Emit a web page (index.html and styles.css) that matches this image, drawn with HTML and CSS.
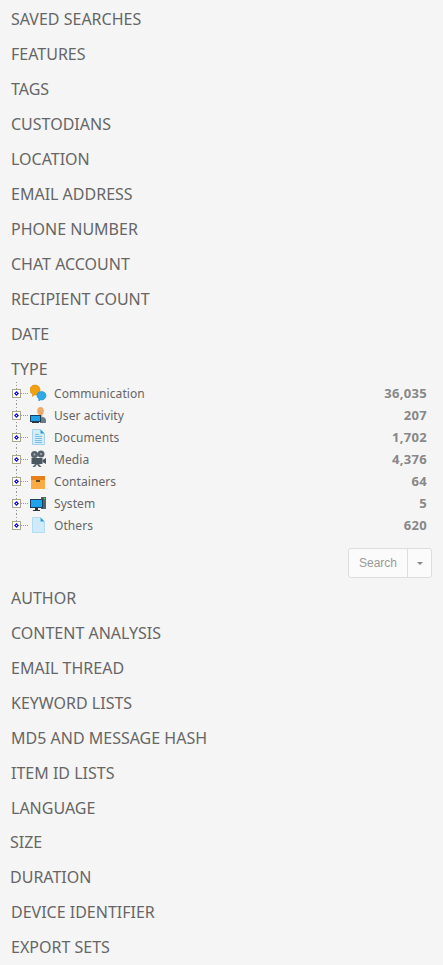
FILE: index.html
```html
<!DOCTYPE html>
<html lang="en">
<head>
<meta charset="utf-8">
<title>Filters</title>
<link rel="stylesheet" href="styles.css">
</head>
<body>
<svg class="defs" width="0" height="0" aria-hidden="true">
  <symbol id="plus" viewBox="0 0 9 9">
    <rect x=".5" y=".5" width="8" height="8" fill="#fff" stroke="#aba78f"/>
    <path d="M4.500 2 7 4.500 4.500 7 2 4.500Z" fill="#1414ee"/>
    <rect x="4" y="4" width="1" height="1" fill="#fff"/>
  </symbol>
</svg>
<section class="group">
  <h3 class="head">SAVED SEARCHES</h3>
  <h3 class="head">FEATURES</h3>
  <h3 class="head">TAGS</h3>
  <h3 class="head">CUSTODIANS</h3>
  <h3 class="head">LOCATION</h3>
  <h3 class="head">EMAIL ADDRESS</h3>
  <h3 class="head">PHONE NUMBER</h3>
  <h3 class="head">CHAT ACCOUNT</h3>
  <h3 class="head">RECIPIENT COUNT</h3>
  <h3 class="head">DATE</h3>
  <h3 class="head">TYPE</h3>
</section>
<ul class="tree">
  <li class="node">
    <svg class="toggle"><use href="#plus"/></svg><span class="stub"></span>
    <svg class="icon" viewBox="0 0 18 18">
      <path d="M0 6C0 3 2.300 1 5 1s5 2 5 5-2.300 5-5 5H4L2.500 12.500V10C.8 9.300 0 7.800 0 6Z" fill="#f0a010" stroke="#d98a08" stroke-width=".6"/>
      <path d="M7 11.500C7 9 9.200 7.500 11.500 7.500S16 9 16 11.500 14 16 11.500 16c-.5 0-1 0-1.300-.2L8.800 17v-2.200C7.700 14 7 12.800 7 11.500Z" fill="#2fa8e8" stroke="#1a8ccc" stroke-width=".6"/>
    </svg>
    <span class="label">Communication</span><span class="count">36,035</span>
  </li>
  <li class="node">
    <svg class="toggle"><use href="#plus"/></svg><span class="stub"></span>
    <svg class="icon" viewBox="0 0 18 18">
      <ellipse cx="10.500" cy="5" rx="3.300" ry="4" fill="#f0a868"/>
      <path d="M8.700 8.500h3.600v3H8.700Z" fill="#e89850"/>
      <path d="M10 11.500c2.800-1.300 5.600-.5 6 2.500v3H10Z" fill="#6d7b86"/>
      <rect x="0" y="9" width="11" height="7" fill="#1d3f5e"/>
      <rect x="1" y="10" width="9" height="5" fill="#20a0e8"/>
      <rect x="2" y="16" width="7" height="1" fill="#333"/>
    </svg>
    <span class="label">User activity</span><span class="count">207</span>
  </li>
  <li class="node">
    <svg class="toggle"><use href="#plus"/></svg><span class="stub"></span>
    <svg class="icon" viewBox="0 0 18 18">
      <path d="M2.500 1.500H10.500L14.500 5.500V16.500H2.500Z" fill="#d3ecfa" stroke="#a9d3ea"/>
      <path d="M10.500 1.500 14.500 5.500H10.500Z" fill="#2a9ddf"/>
      <path d="M5 6.500h4M5 8.500h7M5 10.500h7M5 12.500h7M5 14.500h7" stroke="#7cbfe4"/>
    </svg>
    <span class="label">Documents</span><span class="count">1,702</span>
  </li>
  <li class="node">
    <svg class="toggle"><use href="#plus"/></svg><span class="stub"></span>
    <svg class="icon" viewBox="0 0 18 18">
      <circle cx="4.500" cy="4.500" r="3.500" fill="#56636d"/>
      <circle cx="11" cy="4" r="3.500" fill="#56636d"/>
      <circle cx="4.500" cy="4.500" r="1" fill="#aab3ba"/>
      <circle cx="11" cy="4" r="1" fill="#aab3ba"/>
      <rect x="1.500" y="8" width="11" height="6" fill="#4a5660"/>
      <path d="M12.500 10 16 8V14L12.500 12Z" fill="#4a5660"/>
      <path d="M5 14 2.500 17H5L7 14.500 9 17H11.500L9 14Z" fill="#5e6a74"/>
    </svg>
    <span class="label">Media</span><span class="count">4,376</span>
  </li>
  <li class="node">
    <svg class="toggle"><use href="#plus"/></svg><span class="stub"></span>
    <svg class="icon" viewBox="0 0 18 18">
      <rect x="1" y="4" width="14" height="4" fill="#e8801a"/>
      <rect x="1" y="8" width="14" height="9" fill="#fbab45"/>
      <rect x="6" y="8" width="4" height="2" fill="#5a4630"/>
    </svg>
    <span class="label">Containers</span><span class="count">64</span>
  </li>
  <li class="node">
    <svg class="toggle"><use href="#plus"/></svg><span class="stub"></span>
    <svg class="icon" viewBox="0 0 18 18">
      <rect x="11" y="3" width="5" height="12" fill="#56636d"/>
      <rect x="14" y="4" width="1.200" height="1.200" fill="#3fd03f"/>
      <rect x="0" y="5" width="13" height="9" fill="#1d3f5e"/>
      <rect x="1" y="6" width="11" height="7" fill="#1ea3ea"/>
      <path d="M5 14h3v2h2v1H3v-1h2Z" fill="#333"/>
    </svg>
    <span class="label">System</span><span class="count">5</span>
  </li>
  <li class="node">
    <svg class="toggle"><use href="#plus"/></svg><span class="stub"></span>
    <svg class="icon" viewBox="0 0 18 18">
      <path d="M2.500 1.500H10.500L14.500 5.500V16.500H2.500Z" fill="#cfeafa" stroke="#b2dcf2"/>
      <path d="M10.500 1.500 14.500 5.500H10.500Z" fill="#2a9ddf"/>
    </svg>
    <span class="label">Others</span><span class="count">620</span>
  </li>
</ul>
<div class="actions">
  <div class="split">
    <button class="btn" type="button">Search</button>
    <button class="btn caret-btn" type="button" aria-label="More"><span class="caret"></span></button>
  </div>
</div>
<section class="group">
  <h3 class="head">AUTHOR</h3>
  <h3 class="head">CONTENT ANALYSIS</h3>
  <h3 class="head">EMAIL THREAD</h3>
  <h3 class="head">KEYWORD LISTS</h3>
  <h3 class="head">MD5 AND MESSAGE HASH</h3>
  <h3 class="head">ITEM ID LISTS</h3>
  <h3 class="head short">LANGUAGE</h3>
  <h3 class="head tight">SIZE</h3>
  <h3 class="head tight">DURATION</h3>
  <h3 class="head">DEVICE IDENTIFIER</h3>
  <h3 class="head">EXPORT SETS</h3>
</section>
</body>
</html>
```
FILE: styles.css
```css
* { box-sizing: border-box; }
html, body { margin: 0; padding: 0; }
body {
  width: 443px;
  height: 965px;
  overflow: hidden;
  background: #f5f5f5;
  font-family: "Noto Sans", sans-serif;
  color: #666;
}
.defs { display: block; height: 0; }
.group { display: flex; flex-direction: column; }
.head {
  margin: 0;
  height: 35px;
  padding: 7px 0 0 11px;
  font-size: 16px;
  line-height: 24px;
  font-weight: 400;
  color: #666;
}
.head.short { height: 34px; }
.head.tight { padding-left: 10px; }
.tree {
  list-style: none;
  margin: -3px 0 0;
  padding: 0;
  height: 166px;
}
.node {
  display: flex;
  align-items: center;
  height: 22px;
  padding: 0 16px 0 12px;
  background-image: repeating-linear-gradient(#999 0 1px, transparent 1px 3px);
  background-size: 1px 100%;
  background-repeat: no-repeat;
  background-position: 16px 0;
}
.node:last-child { background-size: 1px 50%; }
.toggle { width: 9px; height: 9px; flex: none; }
.stub { width: 7px; height: 1px; margin-right: 2px; flex: none; border-top: 1px dotted #999; }
.icon { width: 18px; height: 18px; margin-right: 6px; flex: none; }
.label { flex: 1; font-size: 12px; letter-spacing: .08px; color: #666; }
.count { font-size: 13px; font-weight: 700; letter-spacing: .3px; color: #888; }
.actions { display: flex; justify-content: flex-end; padding: 0 11px 0 0; height: 31px; }
.split {
  display: flex;
  height: 30px;
  border: 1px solid #ddd;
  border-radius: 3px;
  background: #fbfbfb;
}
.btn {
  border: 0;
  background: transparent;
  padding: 0;
  width: 58px;
  font-family: "Liberation Sans", sans-serif;
  font-size: 12px;
  color: #999;
}
.caret-btn { width: 24px; border-left: 1px solid #ddd; display: flex; align-items: center; justify-content: center; }
.caret { width: 0; height: 0; border: 3px solid transparent; border-top-color: #888; border-bottom: 0; }
```
